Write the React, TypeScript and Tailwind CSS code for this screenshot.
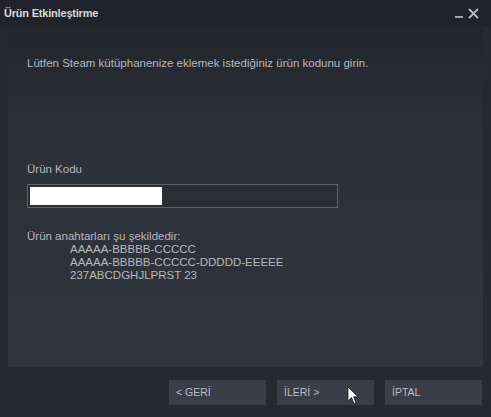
export default function App() {
  return (
    <div
      className="w-[491px] h-[417px] flex flex-col bg-[#262930] text-[11.5px] leading-[13px] text-[#b4b8bf] overflow-hidden"
      style={{ fontFamily: '"Liberation Sans", Arial, sans-serif' }}
    >
      {/* title bar */}
      <div className="h-[27px] shrink-0 flex items-center justify-between pl-[4px] pr-[12px] bg-[#20232a]">
        <span className="font-bold text-[11px] text-[#d7d9dd] tracking-[-0.2px]">Ürün Etkinleştirme</span>
        <div className="flex items-end gap-[5px] text-[#9ea2a9]">
          <span className="w-[8px] h-[2px] bg-[#9ea2a9] mb-[1px]" />
          <svg width="11" height="11" viewBox="0 0 11 11">
            <path d="M1 1L10 10M10 1L1 10" stroke="#b4b8bf" strokeWidth="1.8" />
          </svg>
        </div>
      </div>

      {/* content panel */}
      <div className="h-[340px] shrink-0 mx-[8px] bg-gradient-to-b from-[#22252c] via-[#2c3038] via-30% to-[#30343d] flex flex-col px-[19px]">
        <p className="mt-[30px]">Lütfen Steam kütüphanenize eklemek istediğiniz ürün kodunu girin.</p>

        <p className="mt-[93px]">Ürün Kodu</p>
        <div className="mt-[8px] w-[311px] h-[24px] border border-[#5c6068] bg-[#2b2e35] p-[2px]">
          <div className="w-[132px] h-full bg-white" />
        </div>

        <p className="mt-[22px]">Ürün anahtarları şu şekildedir:</p>
        <div className="pl-[43px]">
          <p>AAAAA-BBBBB-CCCCC</p>
          <p>AAAAA-BBBBB-CCCCC-DDDDD-EEEEE</p>
          <p>237ABCDGHJLPRST 23</p>
        </div>
      </div>

      {/* buttons */}
      <div className="flex justify-end gap-[11px] pr-[9px] mt-[13px]">
        {["< GERİ", "İLERİ >", "İPTAL"].map((label) => (
          <button
            key={label}
            className="w-[97px] h-[25px] bg-[#393e48] text-left pl-[7px] text-[10.5px] text-[#b8bcc4] relative"
          >
            {label}
            {label === "İLERİ >" && (
              <svg className="absolute left-[70px] top-[6px]" width="12" height="19" viewBox="0 0 12 19">
                <path d="M1 1L1 15L4.5 11.5L7 17.5L9 16.6L6.6 10.8L11 10.8Z" fill="#fff" stroke="#222" strokeWidth="0.8" />
              </svg>
            )}
          </button>
        ))}
      </div>
    </div>
  );
}
